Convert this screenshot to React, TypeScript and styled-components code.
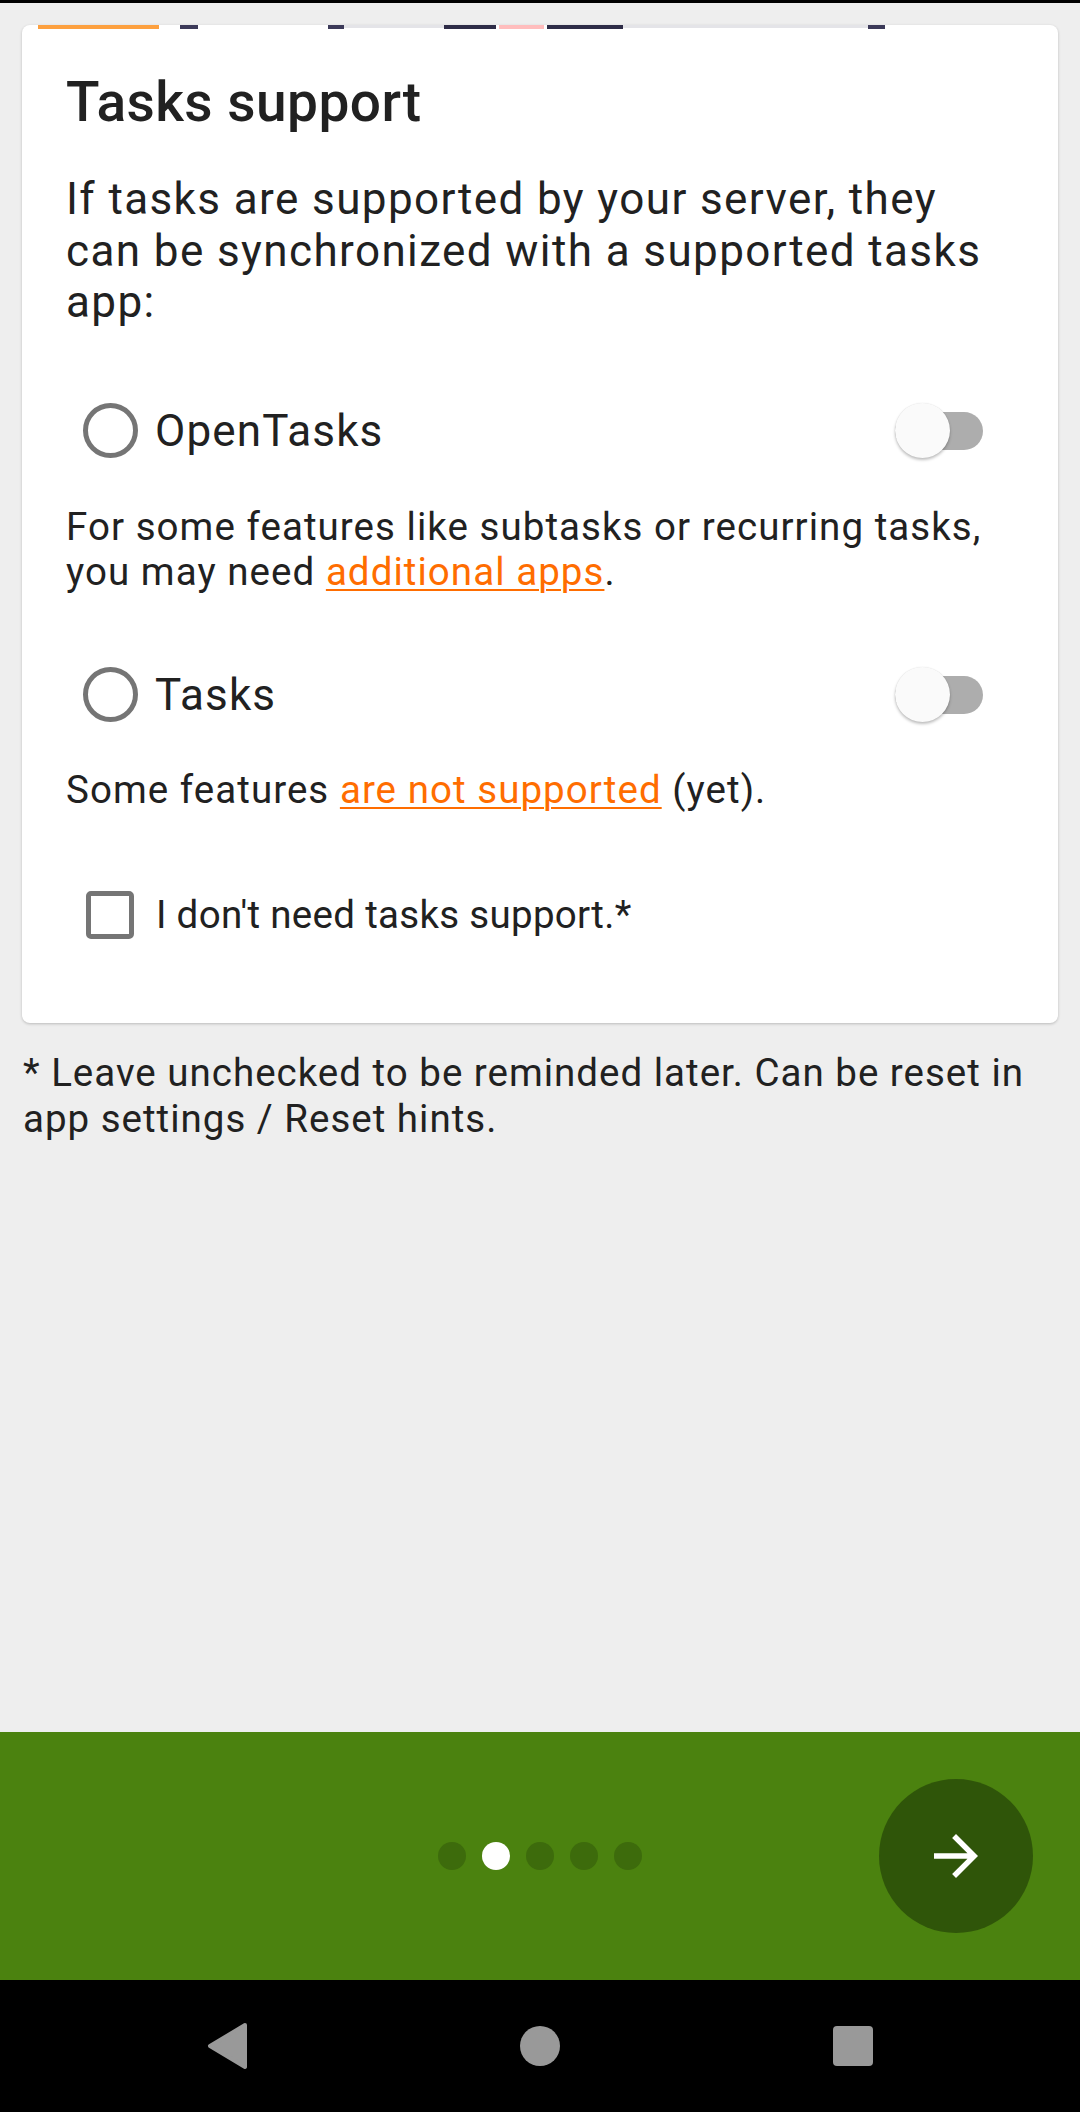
import React from 'react';
import styled, { createGlobalStyle } from 'styled-components';

const GlobalStyle = createGlobalStyle`
  html, body {
    margin: 0;
    padding: 0;
    background: #eeeeee;
  }
  body {
    font-family: Roboto, 'Noto Sans', 'Liberation Sans', sans-serif;
    color: #212121;
    -webkit-font-smoothing: antialiased;
  }
  * { box-sizing: border-box; }
`;

const Screen = styled.div`
  width: 1080px;
  height: 2112px;
  display: flex;
  flex-direction: column;
  background: #eeeeee;
  overflow: hidden;
`;

const StatusStrip = styled.div`
  height: 3px;
  background: #000;
  flex-shrink: 0;
`;

const Content = styled.div`
  flex: 1;
  padding: 22px 22px 0;
  display: flex;
  flex-direction: column;
`;

const Card = styled.div`
  background: #fff;
  border-radius: 8px;
  overflow: hidden;
  box-shadow: 0 1px 3px rgba(0, 0, 0, 0.22);
  padding: 0 44px 42px;
  display: flex;
  flex-direction: column;
`;

const Illustration = styled.svg`
  display: block;
  margin: 0 -44px;
  width: 1036px;
  height: 4px;
`;

const Title = styled.h2`
  margin: 41px 0 0;
  font-size: 55px;
  font-weight: 500;
  line-height: 64px;
  letter-spacing: 0.45px;
  color: #212121;
`;

const Text = styled.p<{ $size: 'body' | 'small'; $gap: number }>`
  margin: ${p => p.$gap}px 0 0;
  font-size: ${p => (p.$size === 'body' ? '44px' : '38.5px')};
  line-height: ${p => (p.$size === 'body' ? '51.5px' : '45.1px')};
  letter-spacing: ${p => (p.$size === 'body' ? '1.4px' : '1.05px')};
  color: #212121;
`;

const Link = styled.a`
  color: #ff6d00;
  text-decoration: underline;
  text-decoration-thickness: 2px;
  text-underline-offset: 4px;
`;

const OptionRow = styled.div<{ $gap: number }>`
  margin-top: ${p => p.$gap}px;
  height: 132px;
  display: flex;
  align-items: center;
  padding-left: 17px;
`;

const Radio = styled.span`
  width: 55px;
  height: 55px;
  border-radius: 50%;
  border: 5.5px solid #757575;
  flex-shrink: 0;
`;

const Checkbox = styled.span`
  width: 48px;
  height: 48px;
  margin-left: 3px;
  margin-right: 4px;
  border-radius: 5px;
  border: 5.5px solid #757575;
  flex-shrink: 0;
`;

const OptionLabel = styled.span<{ $small?: boolean }>`
  margin-left: ${p => (p.$small ? '18px' : '17px')};
  font-size: ${p => (p.$small ? '38.5px' : '44px')};
  letter-spacing: ${p => (p.$small ? '0.3px' : '1.15px')};
  color: #212121;
  flex: 1;
`;

const Switch = styled.span`
  position: relative;
  width: 88px;
  height: 56px;
  margin-right: 31px;
  display: flex;
  align-items: center;
  flex-shrink: 0;
`;

const Track = styled.span`
  width: 88px;
  height: 38px;
  border-radius: 19px;
  background: #adadad;
`;

const Thumb = styled.span`
  position: absolute;
  left: 0;
  top: 0;
  width: 55px;
  height: 55px;
  border-radius: 50%;
  background: #fafafa;
  box-shadow: 0 2px 3px rgba(0, 0, 0, 0.25), 0 0 1px rgba(0, 0, 0, 0.12);
`;

const Note = styled.p`
  margin: 27px 0 0;
  padding-left: 1px;
  font-size: 38.5px;
  line-height: 46.6px;
  letter-spacing: 1px;
  color: #212121;
`;

const Pager = styled.div`
  height: 248px;
  flex-shrink: 0;
  background: #4b820f;
  display: grid;
  grid-template-columns: 1fr auto 1fr;
  align-items: center;
`;

const Dots = styled.div`
  grid-column: 2;
  display: flex;
  gap: 16px;
`;

const Dot = styled.span<{ $active?: boolean }>`
  width: 28px;
  height: 28px;
  border-radius: 50%;
  background: ${p => (p.$active ? '#ffffff' : '#3d6b0c')};
`;

const Fab = styled.button`
  grid-column: 3;
  justify-self: end;
  margin-right: 47px;
  width: 154px;
  height: 154px;
  border-radius: 50%;
  border: none;
  background: #2f5509;
  display: flex;
  align-items: center;
  justify-content: center;
  padding: 0;
`;

const NavBar = styled.div`
  height: 132px;
  flex-shrink: 0;
  background: #000;
  display: flex;
  align-items: center;
  justify-content: space-between;
  padding: 0 206px;
`;

const NavIcon = styled.svg`
  display: block;
`;

export default function App() {
  return (
    <>
      <GlobalStyle />
      <Screen>
        <StatusStrip />
        <Content>
          <Card>
            <Illustration viewBox="0 0 1036 4">
              <rect x="16" y="0" width="121" height="4" fill="#fda03f" />
              <rect x="158" y="0" width="18" height="4" fill="#3c3a59" />
              <rect x="306" y="0" width="16" height="4" fill="#3c3a59" />
              <rect x="322" y="0" width="100" height="3" fill="#e4e4e8" />
              <rect x="422" y="0" width="52" height="4" fill="#2e2c47" />
              <rect x="477" y="0" width="45" height="4" fill="#ffbdbd" />
              <rect x="525" y="0" width="76" height="4" fill="#2e2c47" />
              <rect x="601" y="0" width="245" height="3" fill="#e4e4e8" />
              <rect x="846" y="0" width="17" height="4" fill="#3c3a59" />
            </Illustration>
            <Title>Tasks support</Title>
            <Text $size="body" $gap={40}>
              If tasks are supported by your server, they can be synchronized with a supported tasks
              app:
            </Text>
            <OptionRow $gap={36}>
              <Radio />
              <OptionLabel>OpenTasks</OptionLabel>
              <Switch>
                <Track />
                <Thumb />
              </Switch>
            </OptionRow>
            <Text $size="small" $gap={7}>
              For some features like subtasks or recurring tasks, you may need{' '}
              <Link>additional apps</Link>.
            </Text>
            <OptionRow $gap={35}>
              <Radio />
              <OptionLabel>Tasks</OptionLabel>
              <Switch>
                <Track />
                <Thumb />
              </Switch>
            </OptionRow>
            <Text $size="small" $gap={6}>
              Some features <Link>are not supported</Link> (yet).
            </Text>
            <OptionRow $gap={37}>
              <Checkbox />
              <OptionLabel $small>I don't need tasks support.*</OptionLabel>
            </OptionRow>
          </Card>
          <Note>* Leave unchecked to be reminded later. Can be reset in app settings / Reset hints.</Note>
        </Content>
        <Pager>
          <Dots>
            <Dot />
            <Dot $active />
            <Dot />
            <Dot />
            <Dot />
          </Dots>
          <Fab aria-label="Next">
            <svg width="66" height="66" viewBox="0 0 24 24">
              <path fill="#fff" d="M12 4l-1.41 1.41L16.17 11H4v2h12.17l-5.58 5.59L12 20l8-8z" />
            </svg>
          </Fab>
        </Pager>
        <NavBar>
          <NavIcon width="42" height="48" viewBox="0 0 42 48">
            <path d="M39 3 L4 24 L39 45 Z" fill="#999" stroke="#999" strokeWidth="4" strokeLinejoin="round" />
          </NavIcon>
          <NavIcon width="42" height="42" viewBox="0 0 42 42">
            <circle cx="21" cy="21" r="20" fill="#999" />
          </NavIcon>
          <NavIcon width="42" height="42" viewBox="0 0 42 42">
            <rect x="1" y="1" width="40" height="40" rx="4" fill="#999" />
          </NavIcon>
        </NavBar>
      </Screen>
    </>
  );
}
